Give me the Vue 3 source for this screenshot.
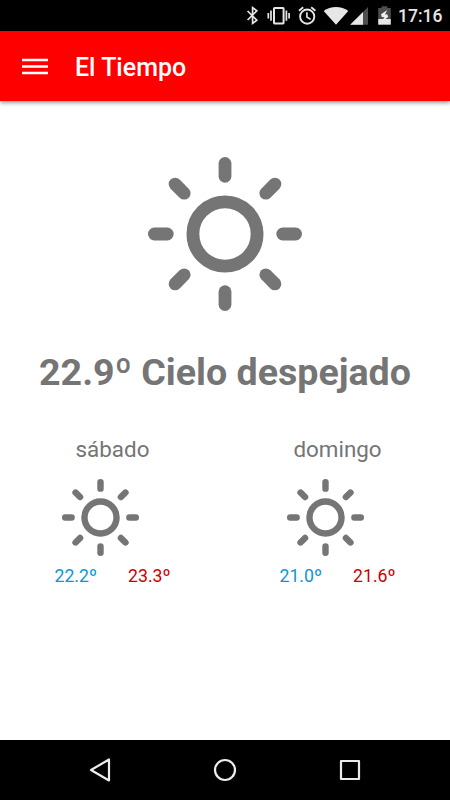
<template>
  <div class="screen">
    <div class="status-bar">
      <svg class="status-icons" width="160" height="31" viewBox="0 0 160 31" fill="none" stroke="#e6e6e6">
        <!-- bluetooth -->
        <path d="M12.6 11 L21.8 20.2 L17.6 23.4 V7.6 L21.8 10.8 L12.6 20" stroke-width="1.7" />
        <!-- vibrate -->
        <rect x="39" y="8" width="9.6" height="15.4" rx="0.6" stroke-width="2" />
        <path d="M36 10.6 V20.8 M51.4 10.6 V20.8 M33.3 13 V18.4 M54.1 13 V18.4" stroke-width="1.7" />
        <!-- alarm -->
        <circle cx="72.2" cy="16.6" r="7.1" stroke-width="1.9" />
        <path d="M71.9 12.2 V17 L75.6 19.4" stroke-width="1.6" />
        <path d="M64 10.8 L68.2 7.3 M80.4 10.8 L76.2 7.3" stroke-width="1.8" />
        <!-- wifi -->
        <path d="M88.7 10.9 C95.5 5.6 106.5 5.6 113.3 10.9 L101 24.8 Z" fill="#e6e6e6" stroke="none" />
        <!-- signal -->
        <path d="M115.2 24.7 L133 6.9 V24.7 Z" fill="#4d4d4d" stroke="none" />
        <path d="M115.2 24.7 L128 11.9 V24.7 Z" fill="#e6e6e6" stroke="none" />
        <!-- battery -->
        <path d="M143.2 8 H146.6 V6.2 H152.4 V8 H155.8 V19 H143.2 Z" fill="#4d4d4d" stroke="none" />
        <path d="M143.2 19 H155.8 V24.7 H143.2 Z" fill="#e6e6e6" stroke="none" />
        <path d="M152.4 10 L146 14.2 L146.9 17.2 L149.5 16.9 L146.8 21.6 L153.2 17 L152.2 14.2 L149.9 14.4 Z" fill="#f0f0f0" stroke="none" />
      </svg>
      <span class="clock">17:16</span>
    </div>

    <header class="toolbar">
      <svg class="menu" width="26" height="17" viewBox="0 0 26 17">
        <path d="M0 2.1 H26 M0 8.5 H26 M0 14.9 H26" stroke="#fff" stroke-width="2.5" />
      </svg>
      <h1 class="title">El Tiempo</h1>
    </header>

    <main class="content">
      <svg class="sun-big" viewBox="-12 -12 24 24">
        <circle r="5" />
        <line v-for="a in angles" :key="a" y1="-11" y2="-9" :transform="`rotate(${a})`" />
      </svg>
      <p class="current">22.9º Cielo despejado</p>
      <div class="days">
        <section v-for="day in days" :key="day.name" class="day">
          <h2 class="day-name">{{ day.name }}</h2>
          <svg class="sun-small" viewBox="-12 -12 24 24">
            <circle r="5" />
            <line v-for="a in angles" :key="a" y1="-11" y2="-9" :transform="`rotate(${a})`" />
          </svg>
          <div class="temps">
            <span class="min">{{ day.min }}</span>
            <span class="max">{{ day.max }}</span>
          </div>
        </section>
      </div>
    </main>

    <nav class="nav-bar">
      <svg width="24" height="26" viewBox="0 0 24 26">
        <path d="M3 13 L21 2.5 V23.5 Z" />
      </svg>
      <svg width="24" height="26" viewBox="0 0 24 26">
        <circle cx="12" cy="13" r="10" />
      </svg>
      <svg width="24" height="26" viewBox="0 0 24 26">
        <rect x="3" y="4" width="18" height="18" />
      </svg>
    </nav>
  </div>
</template>

<script setup>
import { ref } from 'vue'

const angles = [0, 45, 90, 135, 180, 225, 270, 315]

const days = ref([
  { name: 'sábado', min: '22.2º', max: '23.3º' },
  { name: 'domingo', min: '21.0º', max: '21.6º' }
])
</script>

<style>
body {
  margin: 0;
  background: #fff;
}
</style>

<style scoped>
.screen {
  width: 450px;
  height: 800px;
  display: flex;
  flex-direction: column;
  overflow: hidden;
  background: #fff;
  color: #757575;
  font-family: Roboto, 'Liberation Sans', sans-serif;
}

.status-bar {
  height: 31px;
  flex: none;
  display: flex;
  justify-content: flex-end;
  align-items: center;
  padding-right: 7px;
  background: #000;
  color: #e6e6e6;
}

.status-icons {
  flex: none;
  margin-right: 3px;
}

.clock {
  width: 45px;
  font-size: 17.5px;
  font-weight: 500;
  line-height: 31px;
  padding-top: 2px;
  white-space: nowrap;
}

.toolbar {
  height: 70px;
  flex: none;
  display: flex;
  align-items: center;
  padding-left: 22px;
  background: #f00;
  color: #fff;
  box-shadow: 0 2px 4px rgba(0, 0, 0, 0.4);
}

.title {
  margin: 2px 0 0 27px;
  font-size: 25px;
  font-weight: 500;
}

.content {
  flex: 1;
  display: flex;
  flex-direction: column;
  align-items: center;
}

svg circle,
svg line {
  stroke-linecap: round;
}

.sun-big,
.sun-small {
  fill: none;
  stroke: #757575;
  stroke-width: 2;
}

.sun-big {
  width: 154px;
  height: 154px;
  margin-top: 56px;
}

.current {
  margin: 39px 0 0;
  font-size: 37.6px;
  font-weight: 700;
  line-height: 44px;
  white-space: nowrap;
}

.days {
  width: 100%;
  display: flex;
  margin-top: 42px;
}

.day {
  flex: 1;
  display: flex;
  flex-direction: column;
  align-items: center;
}

.day-name {
  margin: 0;
  font-size: 22.4px;
  font-weight: 400;
  line-height: 26px;
}

.sun-small {
  width: 77px;
  height: 77px;
  margin: 17px 24px 0 0;
}

.temps {
  display: flex;
  gap: 31px;
  margin-top: 10px;
  font-size: 17.7px;
  line-height: 20px;
}

.min {
  color: #0d96d2;
}

.max {
  color: #c00;
}

.nav-bar {
  height: 60px;
  flex: none;
  display: flex;
  justify-content: space-between;
  align-items: center;
  padding: 0 88px;
  background: #000;
}

.nav-bar svg {
  fill: none;
  stroke: #ececec;
  stroke-width: 2.2;
  stroke-linejoin: round;
}
</style>
